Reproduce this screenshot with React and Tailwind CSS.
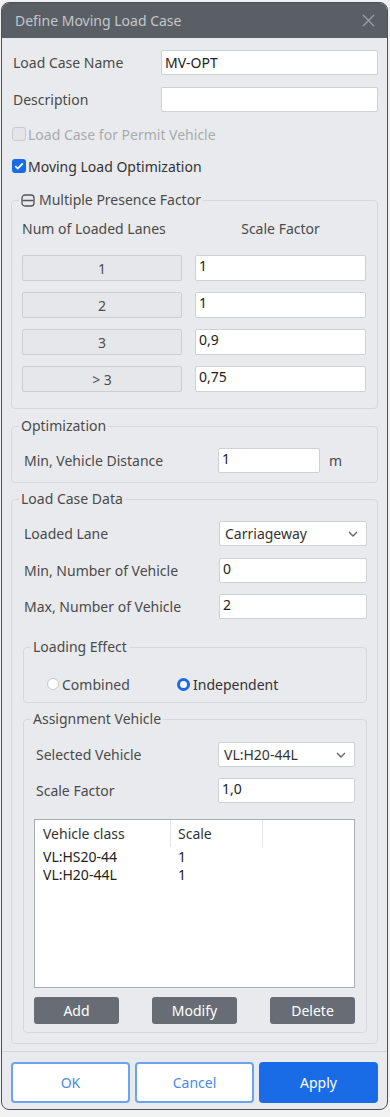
import React from "react";

function Box({ children, className = "", top = true }) {
  return (
    <div
      className={
        "h-[25px] bg-white border border-[#cdd0d4] rounded-[2px] text-[14px] text-[#222] pl-[3px] overflow-hidden " +
        (top ? "leading-[18px] pt-[1px] " : "leading-[23px] ") +
        className
      }
    >
      {children}
    </div>
  );
}

function Select({ children, className = "" }) {
  return (
    <div
      className={
        "h-[25px] bg-white border border-[#cdd0d4] rounded-[2px] text-[14px] text-[#333] pl-[5px] pr-[8px] flex items-center justify-between " +
        className
      }
    >
      <span>{children}</span>
      <svg width="10" height="6" viewBox="0 0 10 6" fill="none">
        <path d="M1 1l4 4 4-4" stroke="#666" strokeWidth="1.4" />
      </svg>
    </div>
  );
}

function Fieldset({ legend, children, className = "", inner = "" }) {
  return (
    <fieldset className={"border border-[#d6d8dc] rounded-[4px] p-0 m-0 min-w-0 " + className}>
      <legend className="ml-[7px] px-[2px] text-[14px] leading-[20px] text-[#4a4a4a]">{legend}</legend>
      <div className={inner}>{children}</div>
    </fieldset>
  );
}

function GrayBtn({ children }) {
  return (
    <div className="h-[26px] bg-[#e6e7ea] border border-[#cbced2] rounded-[2px] flex items-center justify-center text-[14px] text-[#4d4d4d]">
      {children}
    </div>
  );
}

function DarkBtn({ children }) {
  return (
    <div className="w-[85px] h-[27px] bg-[#686d75] rounded-[3px] flex items-center justify-center text-[14px] text-white">
      {children}
    </div>
  );
}

export default function App() {
  return (
    <div className="w-[390px] h-[1117px] bg-[#f2f2f2] pt-[2px] pl-[1px] font-['Noto_Sans','Liberation_Sans',sans-serif]">
      <div className="w-[387px] border border-[#4d5158] rounded-[8px] overflow-hidden bg-[#e9eaee] flex flex-col">
        {/* Title */}
        <div className="h-[35px] bg-[#5a5f66] flex items-center justify-between pl-[13px] pr-[12px]">
          <span className="text-[14px] text-[#c3c6cb]">Define Moving Load Case</span>
          <svg width="13" height="13" viewBox="0 0 13 13">
            <path d="M1 1l11 11M12 1L1 12" stroke="#9aa0a7" strokeWidth="1.3" />
          </svg>
        </div>

        {/* Body */}
        <div className="px-[9px] pt-[12px] pb-[7px] flex flex-col text-[14px] text-[#4a4a4a]">
          <div className="h-[25px] flex items-center justify-between pl-[2px]">
            <span>Load Case Name</span>
            <Box top={false} className="w-[217px]">MV-OPT</Box>
          </div>
          <div className="mt-[12px] h-[25px] flex items-center justify-between pl-[2px]">
            <span>Description</span>
            <Box className="w-[217px]"></Box>
          </div>
          <div className="mt-[12px] h-[20px] flex items-center gap-[2px] pl-[1px]">
            <span className="w-[14px] h-[14px] rounded-[3px] bg-[#e4e5e8] border border-[#c9cbcf]"></span>
            <span className="text-[#a8aaad]">Load Case for Permit Vehicle</span>
          </div>
          <div className="mt-[12px] h-[20px] flex items-center gap-[2px] pl-[1px]">
            <span className="w-[14px] h-[14px] rounded-[3px] bg-[#1a6be6] flex items-center justify-center">
              <svg width="10" height="8" viewBox="0 0 10 8" fill="none">
                <path d="M1.2 4.2l2.6 2.4L8.8 1.3" stroke="#fff" strokeWidth="1.8" />
              </svg>
            </span>
            <span className="text-[#333]">Moving Load Optimization</span>
          </div>

          {/* Multiple Presence Factor */}
          <Fieldset
            className="mt-[14px]"
            inner="pl-[10px] pr-[11px] pb-[16px]"
            legend={
              <span className="flex items-center gap-[4px]">
                <svg width="14" height="13" viewBox="0 0 14 13" fill="none">
                  <rect x="1" y="1" width="12" height="11" rx="3" stroke="#555" strokeWidth="1.3" />
                  <path d="M1.5 6.5h11" stroke="#555" strokeWidth="1.3" />
                </svg>
                <span>Multiple Presence Factor</span>
              </span>
            }
          >
            <div className="mt-[8px] h-[20px] grid grid-cols-[160px_171px] gap-x-[13px] items-center">
              <span>Num of Loaded Lanes</span>
              <span className="text-center">Scale Factor</span>
            </div>
            <div className="mt-[17px] grid grid-cols-[160px_171px] gap-x-[13px] gap-y-[11px]">
              <GrayBtn>1</GrayBtn>
              <Box className="h-[26px]">1</Box>
              <GrayBtn>2</GrayBtn>
              <Box className="h-[26px]">1</Box>
              <GrayBtn>3</GrayBtn>
              <Box className="h-[26px]">0,9</Box>
              <GrayBtn>&gt; 3</GrayBtn>
              <Box className="h-[26px]">0,75</Box>
            </div>
          </Fieldset>

          {/* Optimization */}
          <Fieldset className="mt-[7px]" inner="pl-[12px] pr-[10px] pt-[12px] pb-[9px]" legend="Optimization">
            <div className="h-[25px] flex items-center">
              <span className="w-[194px]">Min, Vehicle Distance</span>
              <Box className="w-[102px]">1</Box>
              <span className="ml-[9px]">m</span>
            </div>
          </Fieldset>

          {/* Load Case Data */}
          <Fieldset className="mt-[6px]" inner="pl-[11px] pr-[10px] pb-[10px]" legend="Load Case Data">
            <div className="mt-[12px] h-[25px] flex items-center justify-between pl-[1px]">
              <span>Loaded Lane</span>
              <Select className="w-[148px]">Carriageway</Select>
            </div>
            <div className="mt-[12px] h-[25px] flex items-center justify-between pl-[1px]">
              <span>Min, Number of Vehicle</span>
              <Box className="w-[148px]">0</Box>
            </div>
            <div className="mt-[11px] h-[25px] flex items-center justify-between pl-[1px]">
              <span>Max, Number of Vehicle</span>
              <Box className="w-[148px]">2</Box>
            </div>

            {/* Loading Effect */}
            <Fieldset className="mt-[18px]" inner="pl-[23px] pt-[17px] pb-[8px]" legend="Loading Effect">
              <div className="h-[20px] flex items-center">
                <span className="w-[12px] h-[12px] rounded-full bg-white border border-[#c6c8cc]"></span>
                <span className="ml-[3px] w-[115px]">Combined</span>
                <span className="w-[13px] h-[13px] rounded-full bg-white border-[3.5px] border-[#1a6be6]"></span>
                <span className="ml-[3px] text-[#333]">Independent</span>
              </div>
            </Fieldset>

            {/* Assignment Vehicle */}
            <Fieldset className="mt-[6px]" inner="pl-[10px] pr-[11px] pb-[8px]" legend="Assignment Vehicle">
              <div className="mt-[13px] h-[25px] flex items-center justify-between pl-[2px]">
                <span>Selected Vehicle</span>
                <Select className="w-[137px]">VL:H20-44L</Select>
              </div>
              <div className="mt-[11px] h-[25px] flex items-center justify-between pl-[2px]">
                <span>Scale Factor</span>
                <Box className="w-[137px]">1,0</Box>
              </div>
              <div className="mt-[16px] h-[169px] bg-white border border-[#a9acb1] text-[14px] text-[#222]">
                <div className="h-[27px] grid grid-cols-[136px_92px_1fr] items-stretch">
                  <span className="pl-[8px] flex items-center border-r border-[#e4e5e8] text-[#333]">Vehicle class</span>
                  <span className="pl-[7px] flex items-center border-r border-[#e4e5e8] text-[#333]">Scale</span>
                  <span></span>
                </div>
                <div className="grid grid-cols-[136px_92px_1fr] leading-[18px] mt-[1px]">
                  <span className="pl-[8px]">VL:HS20-44</span>
                  <span className="pl-[7px]">1</span>
                  <span></span>
                  <span className="pl-[8px]">VL:H20-44L</span>
                  <span className="pl-[7px]">1</span>
                  <span></span>
                </div>
              </div>
              <div className="mt-[9px] flex items-center justify-between">
                <DarkBtn>Add</DarkBtn>
                <DarkBtn>Modify</DarkBtn>
                <DarkBtn>Delete</DarkBtn>
              </div>
            </Fieldset>
          </Fieldset>
        </div>

        {/* Footer */}
        <div className="border-t border-[#d3d5d9] px-[9px] pt-[10px] pb-[6px] flex gap-[5px]">
          <div className="w-[119px] h-[41px] bg-white border-2 border-[#6ba3f2] rounded-[4px] flex items-center justify-center text-[14px] text-[#4a8ae8]">OK</div>
          <div className="w-[119px] h-[41px] bg-white border-2 border-[#6ba3f2] rounded-[4px] flex items-center justify-center text-[14px] text-[#4a8ae8]">Cancel</div>
          <div className="w-[119px] h-[41px] bg-[#1a6be6] rounded-[4px] flex items-center justify-center text-[14px] text-white">Apply</div>
        </div>
      </div>
    </div>
  );
}
